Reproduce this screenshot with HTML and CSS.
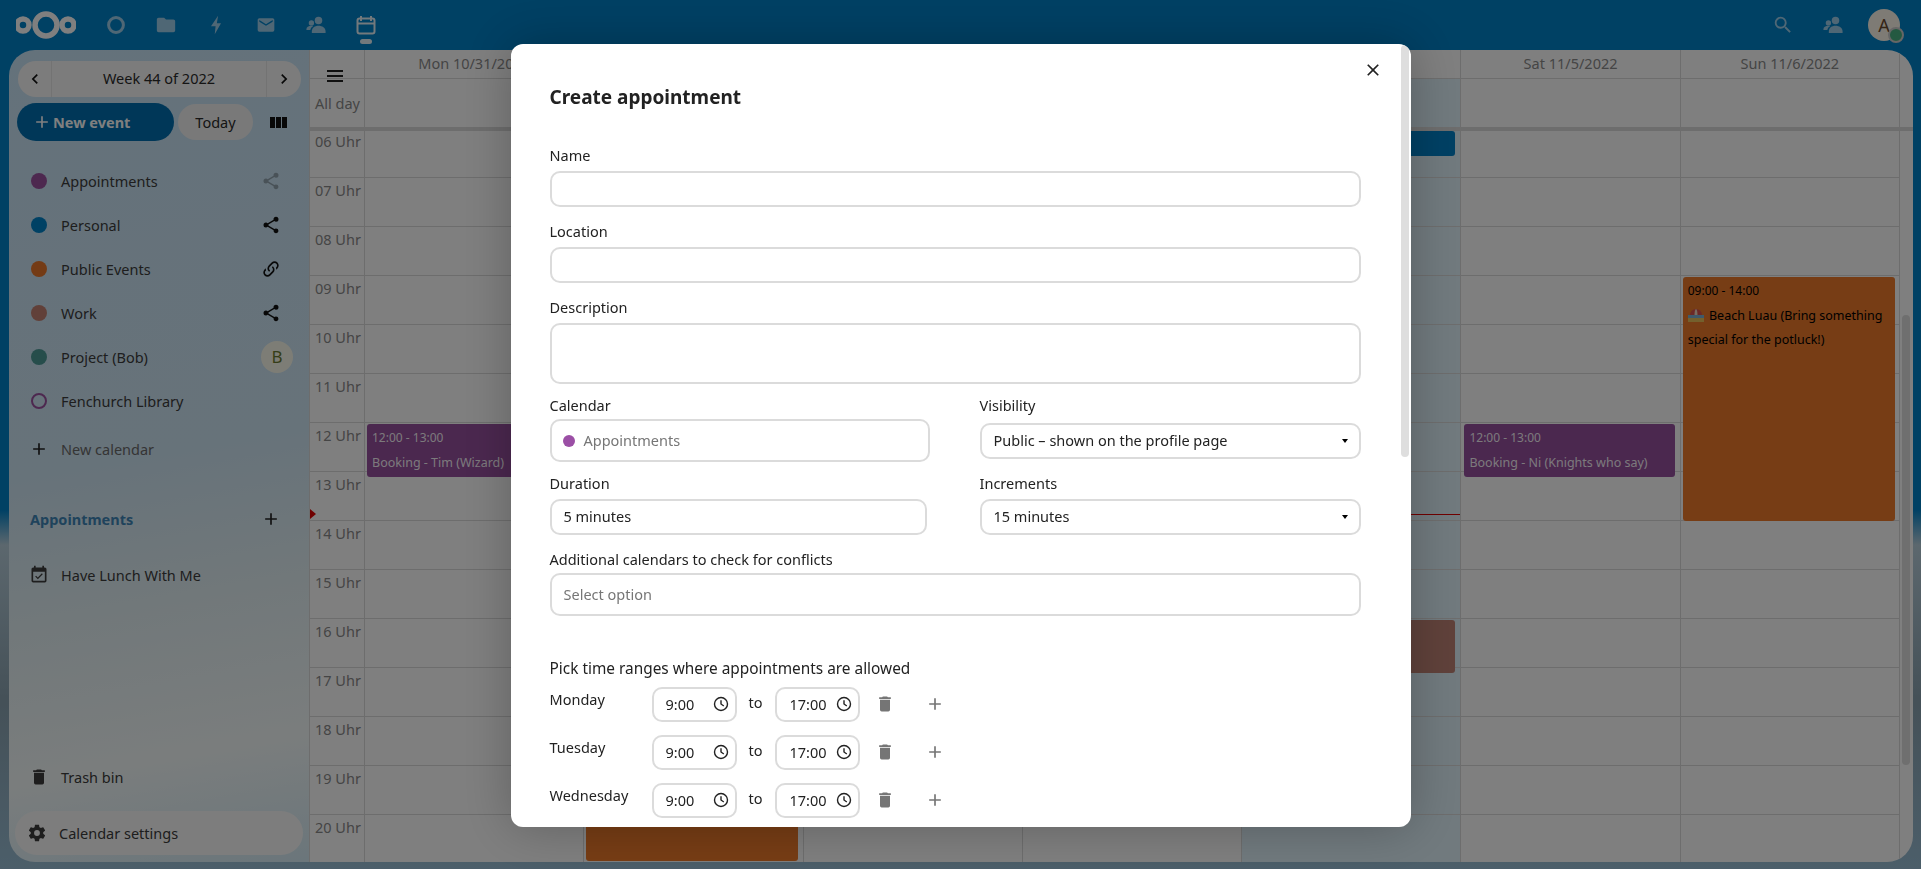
FILE: index.html
```html
<!DOCTYPE html>
<html lang="en">
  <head>
    <meta charset="UTF-8" />
    <meta name="viewport" content="width=device-width, initial-scale=1.0" />
    <title>Create appointment - Calendar</title>
    <link rel="stylesheet" href="styles.css">
  </head>
  <body>
    <svg class="sprite" xmlns="http://www.w3.org/2000/svg">
      <symbol id="i-share" viewBox="0 0 24 24"><path d="M18,16.08C17.24,16.08 16.56,16.38 16.04,16.85L8.91,12.7C8.96,12.47 9,12.24 9,12C9,11.76 8.96,11.53 8.91,11.3L15.96,7.19C16.5,7.69 17.21,8 18,8A3,3 0 0,0 21,5A3,3 0 0,0 18,2A3,3 0 0,0 15,5C15,5.24 15.04,5.47 15.09,5.7L8.04,9.81C7.5,9.31 6.79,9 6,9A3,3 0 0,0 3,12A3,3 0 0,0 6,15C6.79,15 7.5,14.69 8.04,14.19L15.16,18.34C15.11,18.55 15.08,18.77 15.08,19C15.08,20.61 16.39,21.91 18,21.91C19.61,21.91 20.92,20.61 20.92,19A2.92,2.92 0 0,0 18,16.08Z"/></symbol>
      <symbol id="i-link" viewBox="0 0 24 24"><path d="M10.59,13.41C11,13.8 11,14.44 10.59,14.83C10.2,15.22 9.56,15.22 9.17,14.83C7.22,12.88 7.22,9.71 9.17,7.76V7.76L12.71,4.22C14.66,2.27 17.83,2.27 19.78,4.22C21.73,6.17 21.73,9.34 19.78,11.29L18.29,12.78C18.3,11.96 18.17,11.14 17.89,10.36L18.36,9.88C19.54,8.71 19.54,6.81 18.36,5.64C17.19,4.46 15.29,4.46 14.12,5.64L10.59,9.17C9.41,10.34 9.41,12.24 10.59,13.41M13.41,9.17C13.8,8.78 14.44,8.78 14.83,9.17C16.78,11.12 16.78,14.29 14.83,16.24V16.24L11.29,19.78C9.34,21.73 6.17,21.73 4.22,19.78C2.27,17.83 2.27,14.66 4.22,12.71L5.71,11.22C5.7,12.04 5.83,12.86 6.11,13.65L5.64,14.12C4.46,15.29 4.46,17.19 5.64,18.36C6.81,19.54 8.71,19.54 9.88,18.36L13.41,14.83C14.59,13.66 14.59,11.76 13.41,10.59C13,10.2 13,9.56 13.41,9.17Z"/></symbol>
      <symbol id="i-trash" viewBox="0 0 24 24"><path d="M19,4H15.5L14.5,3H9.5L8.5,4H5V6H19M6,19A2,2 0 0,0 8,21H16A2,2 0 0,0 18,19V7H6V19Z"/></symbol>
      <symbol id="i-plus" viewBox="0 0 24 24"><path d="M19,13H13V19H11V13H5V11H11V5H13V11H19V13Z"/></symbol>
      <symbol id="i-cog" viewBox="0 0 24 24"><path d="M12,15.5A3.5,3.5 0 0,1 8.5,12A3.5,3.5 0 0,1 12,8.5A3.5,3.5 0 0,1 15.5,12A3.5,3.5 0 0,1 12,15.5M19.43,12.97C19.47,12.65 19.5,12.33 19.5,12C19.5,11.67 19.47,11.34 19.43,11L21.54,9.37C21.73,9.22 21.78,8.95 21.66,8.73L19.66,5.27C19.54,5.05 19.27,4.96 19.05,5.05L16.56,6.05C16.04,5.66 15.5,5.32 14.87,5.07L14.5,2.42C14.46,2.18 14.25,2 14,2H10C9.75,2 9.54,2.18 9.5,2.42L9.13,5.07C8.5,5.32 7.96,5.66 7.44,6.05L4.95,5.05C4.73,4.96 4.46,5.05 4.34,5.27L2.34,8.73C2.21,8.95 2.27,9.22 2.46,9.37L4.57,11C4.53,11.34 4.5,11.67 4.5,12C4.5,12.33 4.53,12.65 4.57,12.97L2.46,14.63C2.27,14.78 2.21,15.05 2.34,15.27L4.34,18.73C4.46,18.95 4.73,19.03 4.95,18.95L7.44,17.94C7.96,18.34 8.5,18.68 9.13,18.93L9.5,21.58C9.54,21.82 9.75,22 10,22H14C14.25,22 14.46,21.82 14.5,21.58L14.87,18.93C15.5,18.67 16.04,18.34 16.56,17.94L19.05,18.95C19.27,19.03 19.54,18.95 19.66,18.73L21.66,15.27C21.78,15.05 21.73,14.78 21.54,14.63L19.43,12.97Z"/></symbol>
      <symbol id="i-cal-check" viewBox="0 0 24 24"><path d="M19,19H5V8H19M16,1V3H8V1H6V3H5C3.89,3 3,3.89 3,5V19A2,2 0 0,0 5,21H19A2,2 0 0,0 21,19V5C21,3.89 20.1,3 19,3H18V1M16.53,11.06L15.47,10L10.59,14.88L8.47,12.76L7.41,13.82L10.59,17L16.53,11.06Z"/></symbol>
      <symbol id="i-left" viewBox="0 0 24 24"><path d="M15.41,16.58L10.83,12L15.41,7.41L14,6L8,12L14,18L15.41,16.58Z"/></symbol>
      <symbol id="i-right" viewBox="0 0 24 24"><path d="M8.59,16.58L13.17,12L8.59,7.41L10,6L16,12L10,18L8.59,16.58Z"/></symbol>
      <symbol id="i-close" viewBox="0 0 24 24"><path d="M19,6.41L17.59,5L12,10.59L6.41,5L5,6.41L10.59,12L5,17.59L6.41,19L12,13.41L17.59,19L19,17.59L13.41,12L19,6.41Z"/></symbol>
      <symbol id="i-search" viewBox="0 0 24 24"><path d="M9.5,3A6.5,6.5 0 0,1 16,9.5C16,11.11 15.41,12.59 14.44,13.73L14.71,14H15.5L20.5,19L19,20.5L14,15.5V14.71L13.73,14.44C12.59,15.41 11.11,16 9.5,16A6.5,6.5 0 0,1 3,9.5A6.5,6.5 0 0,1 9.5,3M9.5,5C7,5 5,7 5,9.5C5,12 7,14 9.5,14C12,14 14,12 14,9.5C14,7 12,5 9.5,5Z"/></symbol>
      <symbol id="i-folder" viewBox="0 0 24 24"><path d="M10,4H4C2.89,4 2,4.89 2,6V18A2,2 0 0,0 4,20H20A2,2 0 0,0 22,18V8C22,6.89 21.1,6 20,6H12L10,4Z"/></symbol>
      <symbol id="i-mail" viewBox="0 0 24 24"><path d="M20,8L12,13L4,8V6L12,11L20,6M20,4H4C2.89,4 2,4.89 2,6V18A2,2 0 0,0 4,20H20A2,2 0 0,0 22,18V6C22,4.89 21.1,4 20,4Z"/></symbol>
      <symbol id="i-bolt" viewBox="0 0 24 24"><path d="M14.5,1L6,13.5H11.5L10.5,23L18,10H13L14.5,1Z"/></symbol>
      <symbol id="i-people" viewBox="0 0 24 24"><circle cx="15" cy="6.5" r="4.5"/><path d="M7,20C7,15.5 10.5,13 15,13C19.5,13 23.5,15.5 23.5,20V21.5H7Z"/><circle cx="6.5" cy="9.5" r="3.2"/><path d="M0.5,17C0.5,14.5 3,13 6.5,13C7.3,13 8,13.1 8.6,13.3C6.6,14.6 5.4,16.4 5.2,18H0.5Z"/></symbol>
    </svg>

    <header class="topbar">
      <svg class="logo" viewBox="0 0 60 30">
        <circle cx="7" cy="15" r="6" />
        <circle cx="30" cy="15" r="11" />
        <circle cx="52" cy="15" r="6" />
      </svg>
      <nav class="apps">
        <a class="app"><svg class="ring" viewBox="0 0 24 24"><circle cx="12" cy="12" r="7.4" /></svg></a>
        <a class="app"><svg class="ico-lg"><use href="#i-folder" /></svg></a>
        <a class="app"><svg class="ico-md"><use href="#i-bolt" /></svg></a>
        <a class="app"><svg class="ico-md"><use href="#i-mail" /></svg></a>
        <a class="app"><svg class="ico-md"><use href="#i-people" /></svg></a>
        <a class="app active">
          <svg class="cal-app" viewBox="0 0 20 22">
            <path d="M5 1v5M15 1v5" />
            <rect x="1.5" y="3.5" width="17" height="15" rx="2" />
            <path d="M1.5 8.5h17" />
          </svg>
        </a>
      </nav>
      <div class="top-right">
        <a class="app"><svg class="ico-lg"><use href="#i-search" /></svg></a>
        <a class="app"><svg class="ico-md"><use href="#i-people" /></svg></a>
        <div class="user">A<span class="status"></span></div>
      </div>
    </header>

    <main class="content">
      <aside class="sidebar">
        <div class="week-nav">
          <button class="week-btn"><svg class="ico"><use href="#i-left" /></svg></button>
          <span class="week-label">Week 44 of 2022</span>
          <button class="week-btn last"><svg class="ico"><use href="#i-right" /></svg></button>
        </div>
        <div class="actions">
          <button class="new-event"><svg class="ico"><use href="#i-plus" /></svg>New event</button>
          <button class="today">Today</button>
          <span class="view-bars"><i></i><i></i><i></i></span>
        </div>

        <ul class="cal-list">
          <li class="cal-item"><span class="dot purple"></span>Appointments<svg class="ico end faded"><use href="#i-share" /></svg></li>
          <li class="cal-item"><span class="dot blue"></span>Personal<svg class="ico end"><use href="#i-share" /></svg></li>
          <li class="cal-item"><span class="dot orange"></span>Public Events<svg class="ico end"><use href="#i-link" /></svg></li>
          <li class="cal-item"><span class="dot brown"></span>Work<svg class="ico end"><use href="#i-share" /></svg></li>
          <li class="cal-item"><span class="dot teal"></span>Project (Bob)<span class="bob">B</span></li>
          <li class="cal-item"><span class="dot hollow"></span>Fenchurch Library</li>
        </ul>
        <div class="cal-item add"><svg class="ico lead"><use href="#i-plus" /></svg>New calendar</div>

        <div class="section-head">Appointments<svg class="ico end"><use href="#i-plus" /></svg></div>
        <div class="cal-item lunch"><svg class="ico lead"><use href="#i-cal-check" /></svg>Have Lunch With Me</div>

        <div class="side-bottom">
          <div class="cal-item"><svg class="ico lead"><use href="#i-trash" /></svg>Trash bin</div>
          <div class="settings"><svg class="ico"><use href="#i-cog" /></svg>Calendar settings</div>
        </div>
      </aside>

      <section class="calendar">
        <div class="cal-row head-row">
          <div class="corner"><span class="burger"><i></i><i></i><i></i></span></div>
          <div class="day-name">Mon 10/31/2022</div>
          <div class="day-name">Tue 11/1/2022</div>
          <div class="day-name">Wed 11/2/2022</div>
          <div class="day-name">Thu 11/3/2022</div>
          <div class="day-name">Fri 11/4/2022</div>
          <div class="day-name">Sat 11/5/2022</div>
          <div class="day-name">Sun 11/6/2022</div>
        </div>
        <div class="cal-row allday-row">
          <div class="allday-label">All day</div>
          <div class="allday"></div>
          <div class="allday"></div>
          <div class="allday"></div>
          <div class="allday"></div>
          <div class="allday today-col"></div>
          <div class="allday"></div>
          <div class="allday"></div>
        </div>
        <div class="cal-scroll">
          <div class="cal-row grid-row">
            <div class="hours">
              <div class="hour">06 Uhr</div>
              <div class="hour">07 Uhr</div>
              <div class="hour">08 Uhr</div>
              <div class="hour">09 Uhr</div>
              <div class="hour">10 Uhr</div>
              <div class="hour">11 Uhr</div>
              <div class="hour">12 Uhr</div>
              <div class="hour">13 Uhr</div>
              <div class="hour">14 Uhr</div>
              <div class="hour">15 Uhr</div>
              <div class="hour">16 Uhr</div>
              <div class="hour">17 Uhr</div>
              <div class="hour">18 Uhr</div>
              <div class="hour">19 Uhr</div>
              <div class="hour">20 Uhr</div>
              <span class="now-arrow"></span>
            </div>
            <div class="day">
              <div class="event ev-purple ev-noon"><span class="ev-time">12:00 - 13:00</span><span class="ev-title">Booking - Tim (Wizard)</span></div>
            </div>
            <div class="day">
              <div class="event ev-orange ev-tue"></div>
            </div>
            <div class="day"></div>
            <div class="day"></div>
            <div class="day today-col">
              <div class="event ev-blue ev-morning"></div>
              <div class="event ev-brown ev-late"></div>
              <div class="now-line"></div>
            </div>
            <div class="day">
              <div class="event ev-purple ev-noon ev-sat"><span class="ev-time">12:00 - 13:00</span><span class="ev-title">Booking - Ni (Knights who say)</span></div>
            </div>
            <div class="day">
              <div class="event ev-orange ev-luau">
                <span class="ev-time">09:00 - 14:00</span>
                <span class="ev-title wrap">
                  <svg class="beach" viewBox="0 0 16 14">
                    <path d="M2 7a6 6 0 0 1 12 0z" fill="#d9534f" />
                    <path d="M6.5 7a1.5 6 0 0 1 3 0z" fill="#f3d9c0" />
                    <rect x="0" y="7" width="16" height="3" fill="#7fb3d5" />
                    <rect x="0" y="10" width="16" height="4" fill="#e8c15a" />
                  </svg>
                  Beach Luau (Bring something special for the potluck!)
                </span>
              </div>
            </div>
            <div class="scroll-track"><span class="scroll-thumb"></span></div>
          </div>
        </div>
      </section>
    </main>

    <div class="mask">
      <div class="modal">
        <button class="close"><svg class="ico"><use href="#i-close" /></svg></button>
        <span class="modal-scroll"></span>
        <h2 class="modal-title">Create appointment</h2>

        <form class="form">
          <label class="lbl">Name</label>
          <input class="field" type="text" />
          <label class="lbl next">Location</label>
          <input class="field" type="text" />
          <label class="lbl next">Description</label>
          <textarea class="field area"></textarea>

          <div class="two-col row-cal">
            <div>
              <label class="lbl tight">Calendar</label>
              <div class="picker cal-pick"><span class="dot-sm"></span>Appointments</div>
            </div>
            <div>
              <label class="lbl">Visibility</label>
              <div class="drop">Public – shown on the profile page</div>
            </div>
          </div>

          <div class="two-col row-dur">
            <div>
              <label class="lbl">Duration</label>
              <input class="field short" type="text" value="5 minutes" />
            </div>
            <div>
              <label class="lbl">Increments</label>
              <div class="drop">15 minutes</div>
            </div>
          </div>

          <label class="lbl next tight">Additional calendars to check for conflicts</label>
          <div class="picker">Select option</div>

          <p class="pick">Pick time ranges where appointments are allowed</p>

          <div class="slot">
            <span class="weekday">Monday</span>
            <div class="time">9:00<svg class="clock" viewBox="0 0 16 16"><circle cx="8" cy="8" r="6.5" /><path d="M8 4.2V8l2.8 2" /></svg></div>
            <span class="to">to</span>
            <div class="time">17:00<svg class="clock" viewBox="0 0 16 16"><circle cx="8" cy="8" r="6.5" /><path d="M8 4.2V8l2.8 2" /></svg></div>
            <span class="slot-btn del"><svg class="ico"><use href="#i-trash" /></svg></span>
            <span class="slot-btn"><svg class="ico"><use href="#i-plus" /></svg></span>
          </div>
          <div class="slot">
            <span class="weekday">Tuesday</span>
            <div class="time">9:00<svg class="clock" viewBox="0 0 16 16"><circle cx="8" cy="8" r="6.5" /><path d="M8 4.2V8l2.8 2" /></svg></div>
            <span class="to">to</span>
            <div class="time">17:00<svg class="clock" viewBox="0 0 16 16"><circle cx="8" cy="8" r="6.5" /><path d="M8 4.2V8l2.8 2" /></svg></div>
            <span class="slot-btn del"><svg class="ico"><use href="#i-trash" /></svg></span>
            <span class="slot-btn"><svg class="ico"><use href="#i-plus" /></svg></span>
          </div>
          <div class="slot">
            <span class="weekday">Wednesday</span>
            <div class="time">9:00<svg class="clock" viewBox="0 0 16 16"><circle cx="8" cy="8" r="6.5" /><path d="M8 4.2V8l2.8 2" /></svg></div>
            <span class="to">to</span>
            <div class="time">17:00<svg class="clock" viewBox="0 0 16 16"><circle cx="8" cy="8" r="6.5" /><path d="M8 4.2V8l2.8 2" /></svg></div>
            <span class="slot-btn del"><svg class="ico"><use href="#i-trash" /></svg></span>
            <span class="slot-btn"><svg class="ico"><use href="#i-plus" /></svg></span>
          </div>
        </form>
      </div>
    </div>
  </body>
</html>
```

FILE: styles.css
```css
* {
  box-sizing: border-box;
}
html {
  height: 869px;
  overflow: hidden;
}
body {
  margin: 0;
  height: 869px;
  overflow: hidden;
  display: flex;
  flex-direction: column;
  font-family: "Noto Sans", "Open Sans", sans-serif;
  font-size: 14.5px;
  color: #222;
  background: linear-gradient(180deg, #0082c9 0, #0082c9 510px, #b8cfdc 545px, #8aa2b0 700px, #98bdd4 869px);
}
.sprite {
  display: none;
}
svg {
  fill: currentColor;
}
button {
  font: inherit;
  border: none;
  cursor: pointer;
}
ul {
  list-style: none;
  margin: 0;
  padding: 0;
}
.ico {
  width: 20px;
  height: 20px;
  flex: none;
}
.ico-lg {
  width: 22px;
  height: 22px;
}
.ico-md {
  width: 20px;
  height: 20px;
}

/* top bar */
.topbar {
  height: 50px;
  flex: none;
  display: flex;
  align-items: center;
  padding-left: 16px;
  background: #0082c9;
  color: #fff;
}
.logo {
  width: 60px;
  height: 30px;
  flex: none;
  fill: none;
  stroke: #fff;
  stroke-width: 5.5;
}
.apps {
  display: flex;
  margin-left: 15px;
}
.app {
  position: relative;
  width: 50px;
  height: 50px;
  display: flex;
  align-items: center;
  justify-content: center;
  color: rgba(255, 255, 255, 0.62);
}
.app.active {
  color: #fff;
  opacity: 0.9;
}
.app.active::after {
  content: "";
  position: absolute;
  left: 19px;
  bottom: 6px;
  width: 12px;
  height: 5px;
  border-radius: 3px;
  background: #fff;
}
.ring {
  width: 24px;
  height: 24px;
  fill: none;
  stroke: currentColor;
  stroke-width: 3;
}
.cal-app {
  width: 20px;
  height: 22px;
  margin-top: 1px;
  fill: none;
  stroke: currentColor;
  stroke-width: 2;
}
.top-right {
  display: flex;
  align-items: center;
  margin-left: auto;
  margin-right: 21px;
}
.user {
  position: relative;
  width: 32px;
  height: 32px;
  margin-left: 10px;
  border-radius: 50%;
  background: #fcf6ea;
  color: #6b4a2e;
  text-align: center;
  font-size: 18px;
  line-height: 32px;
}
.status {
  position: absolute;
  right: -4px;
  bottom: -2px;
  width: 16px;
  height: 16px;
  border-radius: 50%;
  background: #49b382;
  border: 2px solid #ccc;
}

/* page body */
.content {
  flex: none;
  height: 812px;
  margin: 0 8px 0 9px;
  display: flex;
  border-radius: 26px;
  overflow: hidden;
}
.sidebar {
  width: 300px;
  flex: none;
  display: flex;
  flex-direction: column;
  color: #3c3c3c;
  background: linear-gradient(170deg, #c9e4f6 0, #cfe6f5 50%, #e4f1f5 68%, #f5fbfb 85%, #d6ecf6 100%);
}
.week-nav {
  width: 283px;
  height: 36px;
  margin: 11px 0 0 9px;
  display: flex;
  align-items: center;
  background: #f9f9f9;
  border-radius: 18px;
  overflow: hidden;
}
.week-btn {
  width: 34px;
  height: 36px;
  flex: none;
  padding: 0;
  display: flex;
  align-items: center;
  justify-content: center;
  background: none;
  color: #111;
  border-right: 1px solid #e6e6e6;
}
.week-btn.last {
  width: 35px;
  border-right: none;
  border-left: 1px solid #e6e6e6;
}
.week-label {
  flex: 1;
  text-align: center;
  line-height: 34px;
  height: 36px;
  color: #2b2b2b;
}
.actions {
  height: 38px;
  margin: 6px 0 0 8px;
  display: flex;
  align-items: center;
}
.new-event {
  width: 157px;
  height: 38px;
  padding: 0 0 0 15px;
  display: flex;
  align-items: center;
  gap: 1px;
  border-radius: 19px;
  background: #006fb0;
  color: #fff;
  font-weight: 700;
}
.today {
  width: 75px;
  height: 36px;
  margin-left: 4px;
  border-radius: 18px;
  background: #f3f3f3;
  color: #2b2b2b;
}
.view-bars {
  display: flex;
  gap: 1px;
  margin-left: 17px;
}
.view-bars i {
  width: 5px;
  height: 11px;
  background: #111;
}
.cal-list {
  margin-top: 18px;
}
.cal-item {
  height: 44px;
  padding-left: 22px;
  display: flex;
  align-items: center;
}
.dot {
  width: 16px;
  height: 16px;
  flex: none;
  margin-right: 14px;
  border-radius: 50%;
}
.purple {
  background: #9a519f;
}
.blue {
  background: #0082c9;
}
.orange {
  background: #e8762a;
}
.brown {
  background: #c28172;
}
.teal {
  background: #4c9a97;
}
.hollow {
  border: 2px solid #9a519f;
}
.lead {
  margin: 0 12px 0 -2px;
}
.end {
  margin-left: auto;
  margin-right: 28px;
  color: #111;
}
.faded {
  opacity: 0.3;
}
.bob {
  width: 32px;
  height: 32px;
  margin-left: auto;
  margin-right: 16px;
  border-radius: 50%;
  background: #fbfbec;
  color: #6b7a30;
  text-align: center;
  font-size: 17px;
  line-height: 32px;
}
.add {
  margin-top: 4px;
  color: #6a6a6a;
}
.add .ico {
  color: #222;
}
.section-head {
  height: 44px;
  margin-top: 26px;
  padding-left: 21px;
  display: flex;
  align-items: center;
  font-weight: 700;
  color: #3f86b8;
}
.section-head .ico {
  color: #222;
}
.lunch {
  margin-top: 12px;
}
.side-bottom {
  margin-top: auto;
  padding-bottom: 7px;
}
.settings {
  width: 288px;
  height: 44px;
  margin: 12px 0 0 6px;
  padding-left: 12px;
  display: flex;
  align-items: center;
  gap: 12px;
  border-radius: 22px;
  background: #fbfbfb;
}

/* calendar */
.calendar {
  flex: 1;
  min-width: 0;
  display: flex;
  flex-direction: column;
  background: #fff;
  border-left: 1px solid #dbdbdb;
}
.cal-row {
  display: grid;
  grid-template-columns: 55px repeat(7, 1fr) 13px;
}
.head-row {
  height: 29px;
}
.corner {
  position: relative;
  border-right: 1px solid #dbdbdb;
  border-bottom: 1px solid #dbdbdb;
}
.burger {
  position: absolute;
  left: 17px;
  top: 20px;
  width: 16px;
  z-index: 1;
}
.burger i {
  display: block;
  height: 2px;
  margin-bottom: 3px;
  background: #111;
}
.day-name {
  text-align: center;
  line-height: 26px;
  color: #8a8a8a;
  border-right: 1px solid #dbdbdb;
  border-bottom: 1px solid #dbdbdb;
}
.allday-row {
  height: 52px;
  border-bottom: 4px solid #dbdbdb;
}
.allday-label {
  padding: 14px 0 0 5px;
  color: #8a8a8a;
  border-right: 1px solid #dbdbdb;
}
.allday {
  border-right: 1px solid #dbdbdb;
}
.cal-scroll {
  flex: 1;
  overflow: hidden;
}
.grid-row {
  margin-top: -2px;
}
.hours {
  position: relative;
  border-right: 1px solid #dbdbdb;
}
.hour {
  height: 49px;
  padding: 0 0 0 5px;
  line-height: 24px;
  color: #8a8a8a;
  border-bottom: 1px solid #dbdbdb;
}
.now-arrow {
  position: absolute;
  left: 0;
  top: 380px;
  border-left: 6px solid #e00000;
  border-top: 5px solid transparent;
  border-bottom: 5px solid transparent;
}
.day {
  position: relative;
  border-right: 1px solid #dbdbdb;
  background-image: repeating-linear-gradient(to bottom, transparent 0, transparent 48px, #dbdbdb 48px, #dbdbdb 49px);
}
.today-col {
  background-color: #e2f4fc;
}
.event {
  position: absolute;
  left: 2px;
  right: 5px;
  padding: 2px 5px 0;
  border-radius: 3px;
  color: rgba(255, 255, 255, 0.95);
}
.event.ev-sat {
  left: 3px;
}
.ev-time {
  display: block;
  font-size: 12px;
  line-height: 24px;
}
.ev-title {
  display: block;
  margin-top: 1px;
  font-size: 12.5px;
  line-height: 24px;
  white-space: nowrap;
  overflow: hidden;
}
.ev-title.wrap {
  white-space: normal;
}
.ev-purple {
  background: #97509f;
}
.ev-orange {
  background: #ee7a2a;
  color: #000;
}
.ev-blue {
  background: #0082c9;
}
.ev-brown {
  background: #c08476;
}
.ev-noon {
  top: 295px;
  height: 53px;
}
.ev-tue {
  top: 560px;
  height: 172px;
}
.ev-morning {
  top: 2px;
  height: 25px;
}
.ev-late {
  top: 491px;
  height: 53px;
}
.ev-luau {
  top: 148px;
  height: 244px;
  right: 4px;
}
.beach {
  width: 16px;
  height: 14px;
  margin-right: 2px;
  vertical-align: -2px;
}
.now-line {
  position: absolute;
  left: 0;
  right: 0;
  top: 385px;
  height: 1px;
  background: #e00000;
}
.scroll-track {
  padding: 186px 0 0 2px;
  height: 640px;
}
.scroll-thumb {
  display: block;
  width: 8px;
  height: 450px;
  border-radius: 4px;
  background: #dedede;
}

/* dialog */
.mask {
  position: fixed;
  top: 0;
  right: 0;
  bottom: 0;
  left: 0;
  background: rgba(0, 0, 0, 0.5);
}
.modal {
  position: relative;
  width: 900px;
  height: 783px;
  margin: 44px auto 0;
  padding: 41px 50px 0 39px;
  overflow: hidden;
  border-radius: 12px;
  background: #fff;
  box-shadow: 0 0 50px rgba(0, 0, 0, 0.25);
}
.close {
  position: absolute;
  right: 28px;
  top: 16px;
  width: 20px;
  height: 20px;
  padding: 0;
  background: none;
  color: #222;
}
.modal-scroll {
  position: absolute;
  right: 2px;
  top: 1px;
  width: 8px;
  height: 412px;
  border-radius: 4px;
  background: #dedede;
}
.modal-title {
  margin: 0;
  font-size: 19px;
  line-height: 24px;
  font-weight: 700;
}
.form {
  display: flex;
  flex-direction: column;
  margin-top: 37px;
}
.lbl {
  display: block;
  height: 20px;
  margin-bottom: 5px;
  line-height: 18px;
}
.lbl.next {
  margin-top: 15px;
}
.lbl.tight {
  margin-bottom: 3px;
}
.field {
  display: block;
  width: 100%;
  height: 36px;
  padding: 0 12px;
  font: inherit;
  color: #222;
  border: 2px solid #dbdbdb;
  border-radius: 10px;
  outline: none;
  resize: none;
}
.field.area {
  height: 61px;
}
.field.short {
  width: 377px;
  padding-bottom: 2px;
}
.two-col {
  display: grid;
  grid-template-columns: 380px 381px;
  column-gap: 50px;
}
.row-cal {
  margin-top: 12px;
}
.row-dur {
  margin-top: 12px;
}
.row-cal .lbl:not(.tight) {
  margin-bottom: 7px;
}
.picker {
  height: 43px;
  padding: 0 12px 2px;
  display: flex;
  align-items: center;
  color: #767676;
  border: 2px solid #dbdbdb;
  border-radius: 10px;
}
.dot-sm {
  width: 12px;
  height: 12px;
  margin: 2px 9px 0 0;
  border-radius: 50%;
  background: #9b4fa5;
}
.picker.cal-pick {
  padding-left: 11px;
}
.drop {
  position: relative;
  height: 36px;
  padding: 0 12px;
  line-height: 30px;
  border: 2px solid #dbdbdb;
  border-radius: 10px;
}
.drop::after {
  content: "";
  position: absolute;
  right: 11px;
  top: 14px;
  border-top: 4px solid #000;
  border-left: 3.5px solid transparent;
  border-right: 3.5px solid transparent;
}
.pick {
  margin: 43px 0 8px;
  font-size: 15.4px;
  line-height: 20px;
}
.slot {
  display: flex;
  align-items: flex-start;
  height: 35px;
  margin-bottom: 13px;
}
.weekday {
  width: 102px;
  flex: none;
  line-height: 24px;
}
.time {
  width: 85px;
  height: 35px;
  flex: none;
  padding: 0 6px 2px 12px;
  display: flex;
  align-items: center;
  justify-content: space-between;
  border: 2px solid #dbdbdb;
  border-radius: 10px;
}
.time + .to + .time {
  padding-left: 13px;
}
.clock {
  width: 16px;
  height: 16px;
  fill: none;
  stroke: #222;
  stroke-width: 1.4;
}
.to {
  width: 38px;
  flex: none;
  text-align: center;
  line-height: 31px;
}
.slot-btn {
  width: 49px;
  height: 33px;
  flex: none;
  display: flex;
  align-items: center;
  justify-content: center;
  color: #757575;
}
.slot-btn.del {
  width: 51px;
}
```
